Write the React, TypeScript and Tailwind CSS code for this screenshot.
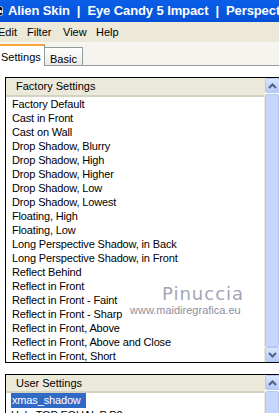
import React from "react";

const factory = [
  "Factory Default",
  "Cast in Front",
  "Cast on Wall",
  "Drop Shadow, Blurry",
  "Drop Shadow, High",
  "Drop Shadow, Higher",
  "Drop Shadow, Low",
  "Drop Shadow, Lowest",
  "Floating, High",
  "Floating, Low",
  "Long Perspective Shadow, in Back",
  "Long Perspective Shadow, in Front",
  "Reflect Behind",
  "Reflect in Front",
  "Reflect in Front - Faint",
  "Reflect in Front - Sharp",
  "Reflect in Front, Above",
  "Reflect in Front, Above and Close",
  "Reflect in Front, Short",
];

function Arrow({ up }: { up: boolean }) {
  return (
    <div className="h-[15px] w-[15px] rounded-[2px] border border-[#b5c8f5] bg-gradient-to-b from-[#dbe6fe] to-[#b6caf8] flex items-center justify-center">
      <svg width="9" height="6" viewBox="0 0 9 6">
        <path
          d={up ? "M1 5 L4.5 1.5 L8 5" : "M1 1 L4.5 4.5 L8 1"}
          stroke="#4d6185"
          strokeWidth="2"
          fill="none"
        />
      </svg>
    </div>
  );
}

function Scrollbar({ full }: { full: boolean }) {
  return (
    <div className="w-[15px] flex flex-col bg-[#fcfcf9] border-l border-[#ece9d8]">
      <Arrow up />
      <div className="flex-1 mt-[1px] rounded-[2px] border border-[#b5c8f5] bg-[#c6d6fc]" />
      {full && <Arrow up={false} />}
    </div>
  );
}

export default function App() {
  return (
    <div
      className="w-[279px] h-[413px] overflow-hidden bg-white relative"
      style={{ fontFamily: '"Liberation Sans", Arial, sans-serif' }}
    >
      {/* Title bar */}
      <div className="h-[22px] bg-gradient-to-b from-[#0a5fe8] to-[#0450d6] flex items-center whitespace-nowrap">
        <div className="w-[10px] h-[10px] ml-[-2px] rounded-full bg-black border border-[#cfd8e8] mr-[5px] flex items-center justify-center">
          <div className="w-[3px] h-[3px] bg-white rounded-full" />
        </div>
        <span className="text-white font-bold text-[13px] tracking-[-0.1px]">
          Alien Skin
          <span className="mx-[7px]">|</span>
          Eye Candy 5 Impact
          <span className="mx-[7px]">|</span>
          Perspective Shadow
        </span>
      </div>
      {/* Menu bar */}
      <div className="h-[20px] bg-[#ece9d8] flex items-center text-[11px] text-black whitespace-nowrap">
        <span className="ml-[-2px] w-[29px]">Edit</span>
        <span className="w-[36px]">Filter</span>
        <span className="w-[33px]">View</span>
        <span>Help</span>
      </div>
      {/* Tabs */}
      <div className="h-[24px] bg-[#f5f4ee] flex items-end border-b border-[#919b9c] relative">
        <div className="h-[22px] w-[45px] bg-white border-t-[2px] border-t-[#f7a33a] border-r border-[#919b9c] text-[11px] pl-[1px] pt-[3px] -mb-[1px] z-10">
          Settings
        </div>
        <div className="h-[18px] w-[38px] bg-gradient-to-b from-[#fefefe] to-[#ecebe6] border-t border-r border-[#919b9c] text-[11px] pl-[5px] pt-[3px]">
          Basic
        </div>
      </div>
      {/* Panel */}
      <div className="pt-[11px] pl-[5px]">
        {/* Factory box */}
        <div className="h-[286px] border-t border-l border-b border-black flex bg-white">
          <div className="flex-1 flex flex-col min-w-0">
            <div className="h-[20px] bg-[#ebe9da] border-b-[2px] border-[#d6d2c2] text-[11px] pl-[10px] flex items-center">
              Factory Settings
            </div>
            <div className="pl-[6px] text-[11px] leading-[14px] tracking-[-0.15px] whitespace-nowrap">
              {factory.map((f) => (
                <div key={f} className="h-[14px]">
                  {f}
                </div>
              ))}
            </div>
          </div>
          <Scrollbar full />
        </div>
        {/* User box */}
        <div className="mt-[11px] h-[60px] border-t border-l border-black flex bg-white">
          <div className="flex-1 flex flex-col min-w-0">
            <div className="h-[18px] bg-[#ebe9da] border-b-[2px] border-[#d6d2c2] text-[11px] pl-[10px] flex items-center">
              User Settings
            </div>
            <div className="pl-[5px] text-[11px] leading-[14px] tracking-[-0.15px] whitespace-nowrap">
              <div className="h-[15px]">
                <span className="bg-[#316ac5] text-white px-[1px] inline-block h-[15px] w-[75px]">
                  xmas_shadow
                </span>
              </div>
              <div className="h-[14px]">Halo TOP EQUAL P P2</div>
            </div>
          </div>
          <Scrollbar full={false} />
        </div>
      </div>
      {/* Watermark */}
      <div className="absolute left-[130px] top-[283px] w-[124px] flex flex-col items-start text-[#a3a6b8] pointer-events-none">
        <span
          className="ml-[32px] text-[18px] leading-[21px] tracking-[1px]"
          style={{ fontFamily: '"DejaVu Sans", sans-serif' }}
        >
          Pinuccia
        </span>
        <span className="text-[11px] leading-[12px] text-[#8c8f9e]">www.maidiregrafica.eu</span>
      </div>
    </div>
  );
}
